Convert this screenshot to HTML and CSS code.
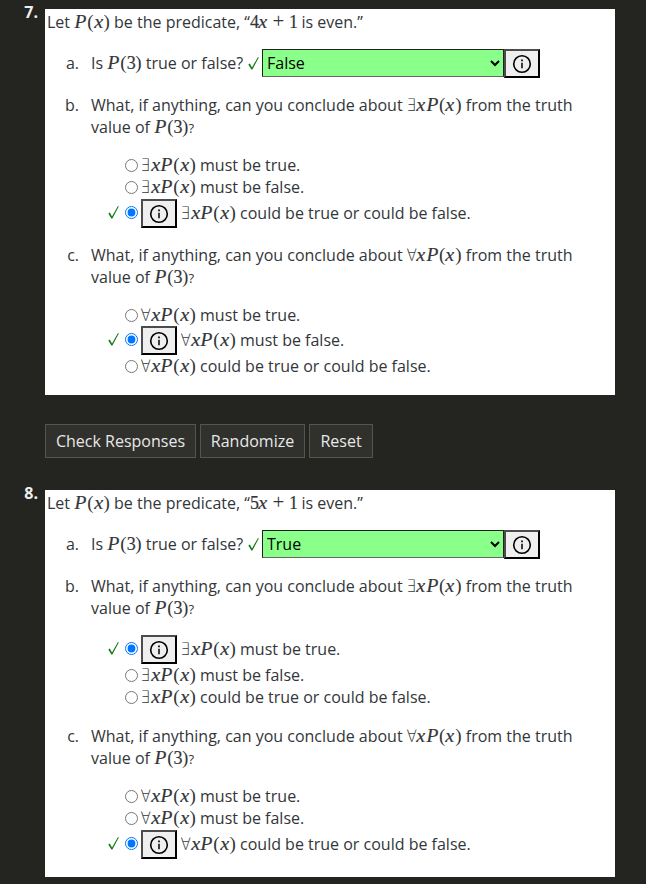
FILE: index.html
```html
<!DOCTYPE html>
<html lang="en">
<head>
<meta charset="utf-8">
<title>Predicate exercises</title>
<link rel="stylesheet" href="styles.css">
</head>
<body>
<svg width="0" height="0" class="defs"><defs>
<g id="info" fill="none" stroke="#000"><circle cx="10" cy="10" r="8.3" stroke-width="1.6"/><path d="M10 8.8v5.4" stroke-width="1.5"/><path d="M10 5.6v1.7" stroke-width="1.7"/></g>
<path id="tick" d="M.3 7.6 L1.8 6.6 L4 10.4 L9.8 .2 L10.9 .2 L4.4 12.6 L3.4 12.6 Z" fill="#107c10"/>
</defs></svg>
<main id="exercises"></main>
<script src="exercises.js"></script>
</body>
</html>
```

FILE: exercises.js
```js
const P = '<i class="m mp">P</i>';
const X = '<i class="m mx">x</i>';
const wrap = s => `<span class="math">${s}</span>`;
const px = `${P}<b class="m mb">(</b>${X}<b class="m mb">)</b>`;
const p3 = wrap(`${P}<b class="m mb">(</b><b class="m md">3</b><b class="m mb">)</b>`);
const quant = q => wrap(`<b class="m mq">${q}</b>${X}${px}`);
const tick = '<svg class="tick" viewBox="0 0 11 13"><use href="#tick"/></svg>';
const info = '<button class="info" aria-label="Info"><svg viewBox="0 0 20 20"><use href="#info"/></svg></button>';
const answers = ['must be true.', 'must be false.', 'could be true or could be false.'];

const options = (name, q, chosen) => answers.map((text, i) => {
  const on = i === chosen;
  return `<label class="option${on ? ' chosen' : ''}"><span class="mark">${on ? tick : ''}</span>` +
    `<input type="radio" name="${name}"${on ? ' checked' : ''}>${on ? info : ''}` +
    `<span class="answer">${quant(q)} ${text}</span></label>`;
}).join('');

const part = (letter, n, q, chosen) => `<section class="part"><span class="letter">${letter}.</span>
  <div class="body"><p>What, if anything, can you conclude about ${quant(q)} from the truth<br>value of ${p3}<span class="qm">?</span></p>
  <div class="options">${options(letter + n, q, chosen)}</div></div></section>`;

const exercise = (n, k, value, b, c) => `<article class="exercise"><strong class="number">${n}.</strong>
  <div class="card"><p class="intro">Let ${wrap(px)} be the predicate, “${wrap(`<b class="m md">${k}</b>${X}<b class="m plus">+</b><b class="m md">1</b>`)} is even.”</p>
  <section class="part first"><span class="letter">a.</span><div class="body row"><span class="ask">Is ${p3} true or false?</span>${tick}<select><option>${value}</option></select>${info}</div></section>
  ${part('b', n, '∃', b)}${part('c', n, '∀', c)}</div></article>`;

document.getElementById('exercises').innerHTML =
  exercise(7, 4, 'False', 2, 1) +
  '<div class="actions"><button>Check Responses</button><button>Randomize</button><button>Reset</button></div>' +
  exercise(8, 5, 'True', 0, 2);
```

FILE: styles.css
```css
* { box-sizing: border-box; }
html { background: #242420; overflow: hidden; }
body { margin: 0; padding-top: 9px; font: 16px/22px "Open Sans", "Noto Sans", sans-serif; color: #333639; }
p { margin: 0; white-space: nowrap; }
.defs { position: absolute; }
.exercise { display: flex; }
.number { width: 45px; padding-right: 7px; text-align: right; color: #eee; margin-top: -8px; height: 22px; }
.card { width: 570px; height: 386px; background: #fff; padding: 2px 2px 0; }
.exercise:last-child .card { height: 387px; }
.part { display: flex; margin-top: 16px; }
.part:last-child { margin-top: 17px; }
.letter { width: 44px; padding-right: 12px; text-align: right; }
.first .letter { line-height: 28px; }
.row { display: flex; height: 29px; align-items: flex-start; }
.ask { line-height: 28px; white-space: nowrap; width: 157px; }
.row .tick { margin: 8px 3px 0 0; }
.tick { width: 11px; height: 13px; display: block; }
select { width: 242px; height: 28px; border: 1px solid #222; border-bottom-color: #666; border-radius: 0; background-color: #8aff8a; font: inherit; color: #000; padding: 0; }
.info { width: 36px; height: 29px; flex: none; border: 2px outset #000; border-color: #4c4c4c #000 #000 #4c4c4c; border-radius: 0; background: #efefef; padding: 3px 0 0 0; display: flex; justify-content: center; }
.info svg { width: 20px; height: 20px; }
.options { margin-top: 16px; }
.option { display: flex; height: 22px; align-items: center; white-space: nowrap; }
.option.chosen { height: 29px; }
.option.chosen:last-child { margin: 1px 0 -1px; }
.mark { width: 17px; margin-left: 17px; flex: none; }
.option input { margin: 0 3px 0 0; width: 13px; height: 13px; flex: none; }
.option.chosen input { margin-top: -2px; }
.chosen .tick { margin-top: -2px; }
.chosen .answer { margin-left: 4px; margin-top: -1px; }
.math { font: 17px/0 "Liberation Serif", serif; white-space: nowrap; }
.m { display: inline-block; line-height: 0; font-weight: normal; text-align: center; -webkit-text-stroke: .2px #333639; }
.mp { width: 13px; font-size: 18px; transform: scaleX(1.08); }
.mx { width: 9.7px; font-size: 18px; transform: scaleX(1.12); }
.mb { width: 6.5px; font-size: 19px; -webkit-text-stroke: 0; }
.md { width: 8.4px; font-size: 18px; }
.mq { width: 9.5px; font: 200 17px/0 "DejaVu Sans Light", "DejaVu Sans", sans-serif; -webkit-text-stroke: 0; transform: translateX(-1px) scaleX(.9); }
.plus { width: 21px; font-size: 21px; -webkit-text-stroke: 0; }
.qm { font-size: 13px; line-height: 0; }
.actions { display: flex; gap: 4px; padding: 29px 0 32px 45px; }
.actions button { height: 34px; width: 151px; padding: 0; border: 1px solid #555550; background: #30302c; color: #e8e8e8; font: 500 16px/22px "Open Sans", sans-serif; border-radius: 0; }
.actions button:nth-child(2) { width: 105px; }
.actions button:nth-child(3) { width: 64px; }
```
